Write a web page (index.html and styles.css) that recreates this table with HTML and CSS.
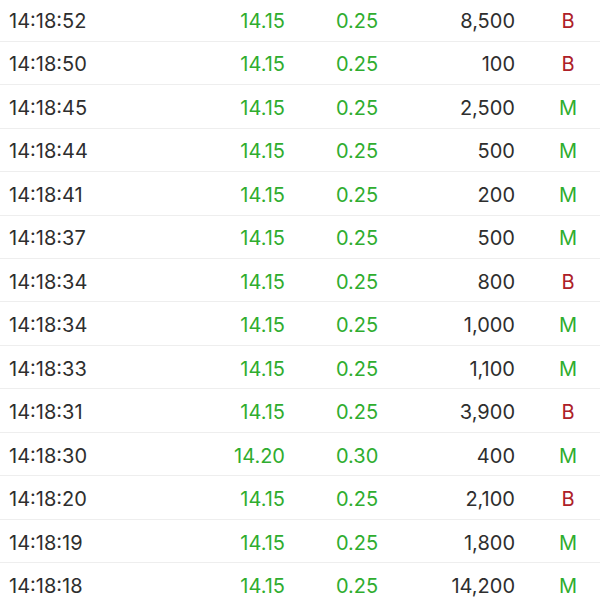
FILE: index.html
```html
<!DOCTYPE html>
<html>
<head>
<meta charset="utf-8">
<link rel="stylesheet" href="styles.css">
</head>
<body>
<div class="list">
  <div class="row"><span class="time">14:18:52</span><span class="price up">14.15</span><span class="chg up">0.25</span><span class="vol">8,500</span><span class="side buy">B</span></div>
  <div class="row"><span class="time">14:18:50</span><span class="price up">14.15</span><span class="chg up">0.25</span><span class="vol">100</span><span class="side buy">B</span></div>
  <div class="row"><span class="time">14:18:45</span><span class="price up">14.15</span><span class="chg up">0.25</span><span class="vol">2,500</span><span class="side mid">M</span></div>
  <div class="row"><span class="time">14:18:44</span><span class="price up">14.15</span><span class="chg up">0.25</span><span class="vol">500</span><span class="side mid">M</span></div>
  <div class="row"><span class="time">14:18:41</span><span class="price up">14.15</span><span class="chg up">0.25</span><span class="vol">200</span><span class="side mid">M</span></div>
  <div class="row"><span class="time">14:18:37</span><span class="price up">14.15</span><span class="chg up">0.25</span><span class="vol">500</span><span class="side mid">M</span></div>
  <div class="row"><span class="time">14:18:34</span><span class="price up">14.15</span><span class="chg up">0.25</span><span class="vol">800</span><span class="side buy">B</span></div>
  <div class="row"><span class="time">14:18:34</span><span class="price up">14.15</span><span class="chg up">0.25</span><span class="vol">1,000</span><span class="side mid">M</span></div>
  <div class="row"><span class="time">14:18:33</span><span class="price up">14.15</span><span class="chg up">0.25</span><span class="vol">1,100</span><span class="side mid">M</span></div>
  <div class="row"><span class="time">14:18:31</span><span class="price up">14.15</span><span class="chg up">0.25</span><span class="vol">3,900</span><span class="side buy">B</span></div>
  <div class="row"><span class="time">14:18:30</span><span class="price up">14.20</span><span class="chg up">0.30</span><span class="vol">400</span><span class="side mid">M</span></div>
  <div class="row"><span class="time">14:18:20</span><span class="price up">14.15</span><span class="chg up">0.25</span><span class="vol">2,100</span><span class="side buy">B</span></div>
  <div class="row"><span class="time">14:18:19</span><span class="price up">14.15</span><span class="chg up">0.25</span><span class="vol">1,800</span><span class="side mid">M</span></div>
  <div class="row"><span class="time">14:18:18</span><span class="price up">14.15</span><span class="chg up">0.25</span><span class="vol">14,200</span><span class="side mid">M</span></div>
</div>
</body>
</html>
```
FILE: styles.css
```css
html, body {
  margin: 0;
  padding: 0;
  background: #ffffff;
  overflow: hidden;
}
.list {
  margin-top: -1.8px;
  font-family: Inter, "Noto Sans", sans-serif;
  font-size: 20px;
  color: #2e2e2e;
}
.row {
  display: grid;
  grid-template-columns: 185px 100px 51px 100px 79px 21px 64px;
  height: 43.47px;
  align-items: center;
  box-sizing: border-box;
  border-bottom: 1px solid #eeeeee;
  padding-top: 3px;
}
.row > span { white-space: nowrap; }
.time { grid-column: 1; padding-left: 9px; }
.price { grid-column: 2; text-align: right; }
.chg { grid-column: 4; text-align: left; }
.vol { grid-column: 5; text-align: right; }
.side { grid-column: 7; text-align: center; }
.up, .mid { color: #2fad2f; }
.buy { color: #ad2028; }
```
